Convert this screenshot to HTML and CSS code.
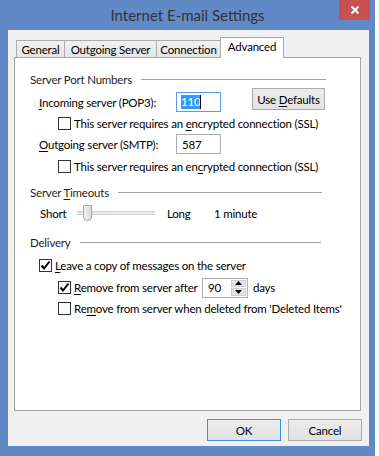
FILE: index.html
```html
<!doctype html>
<html>
  <head>
    <title>Internet E-mail Settings</title>
    <link rel="stylesheet" href="styles.css">
  </head>
  <body>

    <div class="window">

      <!--Title bar-->
      <div class="titlebar">
        <span class="title">Internet E-mail Settings</span>
        <span class="close">
          <svg width="10" height="10" viewBox="0 0 10 10"><path d="M1.5 1.5 L8.5 8.5 M8.5 1.5 L1.5 8.5" stroke="#fff" stroke-width="2"/></svg>
        </span>
      </div>

      <div class="client">

        <!--Tabs-->
        <div class="tabs">
          <div class="tab tab-general">General</div>
          <div class="tab tab-outgoing">Outgoing Server</div>
          <div class="tab tab-connection">Connection</div>
          <div class="tab tab-advanced active">Advanced</div>
        </div>

        <!--Advanced page-->
        <div class="panel">

          <div class="row group">
            <span>Server Port Numbers</span>
            <span class="rule"></span>
          </div>

          <div class="row lvl1 port-in">
            <span class="port-label"><u>I</u>ncoming server (POP3):</span>
            <span class="field focused"><span class="sel">110</span><span class="caret"></span></span>
            <span class="btn small"><span>Use <u>D</u>efaults</span></span>
          </div>
          <div class="row lvl2 ssl-in">
            <span class="cb"></span>
            <span>This server requires an <u>e</u>ncrypted connection (SSL)</span>
          </div>

          <div class="row lvl1">
            <span class="port-label"><u>O</u>utgoing server (SMTP):</span>
            <span class="field">587</span>
          </div>
          <div class="row lvl2">
            <span class="cb"></span>
            <span>This server requires an en<u>c</u>rypted connection (SSL)</span>
          </div>

          <div class="row group group-timeouts">
            <span>Server <u>T</u>imeouts</span>
            <span class="rule"></span>
          </div>
          <div class="row slider-row">
            <span class="short">Short</span>
            <span class="slider"><span class="thumb"></span></span>
            <span class="long">Long</span>
            <span>1 minute</span>
          </div>

          <div class="row group group-delivery">
            <span>Delivery</span>
            <span class="rule"></span>
          </div>
          <div class="row lvl1 leave">
            <span class="cb checked">
              <svg width="11" height="11" viewBox="0 0 11 11"><path d="M1.5 5.5 L4 8.5 L9.5 1.5" fill="none" stroke="#000" stroke-width="2"/></svg>
            </span>
            <span><u>L</u>eave a copy of messages on the server</span>
          </div>
          <div class="row lvl2 remove-after">
            <span class="cb checked">
              <svg width="11" height="11" viewBox="0 0 11 11"><path d="M1.5 5.5 L4 8.5 L9.5 1.5" fill="none" stroke="#000" stroke-width="2"/></svg>
            </span>
            <span class="after-label"><u>R</u>emove from server after</span>
            <span class="spin">
              <span class="spin-value">90</span>
              <span class="spin-btns">
                <span class="spin-btn">
                  <svg width="7" height="4" viewBox="0 0 7 4"><path d="M0 4 L3.5 0 L7 4 Z" fill="#000"/></svg>
                </span>
                <span class="spin-btn">
                  <svg width="7" height="4" viewBox="0 0 7 4"><path d="M0 0 L3.5 4 L7 0 Z" fill="#000"/></svg>
                </span>
              </span>
            </span>
            <span class="days">days</span>
          </div>
          <div class="row lvl2 remove-deleted">
            <span class="cb"></span>
            <span>Re<u>m</u>ove from server when deleted from 'Deleted Items'</span>
          </div>

        </div>

        <!--Dialog buttons-->
        <div class="actions">
          <span class="btn default">OK</span>
          <span class="btn">Cancel</span>
        </div>

      </div>
    </div>

  </body>
</html>
```

FILE: styles.css
```css
body {
  margin:0;
  background:#fff;
  font-family: Lato, "Segoe UI", sans-serif;
  font-size:11.5px;
  letter-spacing:-0.2px;
  color:#000;
}

u {
  text-decoration:underline;
  text-underline-offset:2px;
}

.window {
  position:relative;
  width:375px;
  height:456px;
  background:#6189c6;
  display:flex;
  flex-direction:column;
}

.titlebar {
  height:30px;
  display:flex;
  align-items:center;
  justify-content:center;
}
.title {
  font-size:15px;
  letter-spacing:0;
  color:#333;
}
.close {
  position:absolute;
  top:0;
  right:5px;
  width:31px;
  height:20px;
  background:#c75050;
  display:flex;
  align-items:center;
  justify-content:center;
}

.client {
  margin:0 6px 0 8px;
  height:416px;
  box-sizing:border-box;
  padding:7px 8px 0 6px;
  background:#f1f0f1;
}

/* Tabs */

.tabs {
  display:flex;
  align-items:flex-end;
  height:20px;
  padding-left:2px;
  position:relative;
  z-index:1;
}
.tab {
  box-sizing:border-box;
  height:17px;
  margin-right:-1px;
  border:1px solid #acacac;
  border-bottom:none;
  background:linear-gradient(#f0f0f0, #e5e5e5);
  display:flex;
  align-items:center;
  justify-content:center;
}
.tab-general { width:49px; }
.tab-outgoing { width:93px; }
.tab-connection { width:65px; }
.tab-advanced { width:64px; }
.tab.active {
  height:21px;
  margin-bottom:-1px;
  background:#fff;
  padding-bottom:3px;
}

.panel {
  height:354px;
  box-sizing:border-box;
  border:1px solid #a3a8a3;
  background:#fff;
  padding:10px 0 0 15px;
}

/* Rows */

.row {
  display:flex;
  align-items:center;
  height:22px;
  white-space:nowrap;
}
.lvl1 { margin-left:9px; }
.lvl2 { margin-left:28px; }

.group span:first-child { color:#1e1e1e; }
.rule {
  flex:1;
  height:1px;
  background:#a0a0a0;
  margin:0 34px 0 9px;
}
.group-timeouts { margin-top:4px; }
.group-timeouts .rule { margin-right:38px; }
.group-delivery { margin-top:8px; }
.group-delivery .rule { margin-right:39px; }

.port-in { margin-top:1px; }
.ssl-in { height:20px; }
.port-label { width:137px; }

.field {
  box-sizing:border-box;
  width:45px;
  height:20px;
  padding-left:5px;
  border:1px solid #abadb3;
  background:#fff;
  display:flex;
  align-items:center;
}
.field.focused {
  border-color:#5a9be6;
  padding-left:4px;
}
.sel {
  background:#3399ff;
  color:#fff;
  line-height:14px;
}
.caret {
  width:1px;
  height:14px;
  background:#000;
}

.btn {
  box-sizing:border-box;
  width:74px;
  height:22px;
  border:1px solid #acacac;
  background:linear-gradient(#ececec, #e2e2e2);
  display:flex;
  align-items:center;
  justify-content:center;
}
.btn.small {
  width:73px;
  margin-left:31px;
  align-self:flex-start;
  margin-top:-3px;
}
.btn.default { border-color:#3c8ef0; }

/* Checkboxes */

.cb {
  box-sizing:border-box;
  width:13px;
  height:13px;
  margin-right:3px;
  border:1px solid #333;
  background:#fff;
  display:flex;
  align-items:center;
  justify-content:center;
  flex-shrink:0;
}

/* Slider */

.slider-row { height:20px; }
.short {
  width:37px;
  margin-left:10px;
}
.slider {
  width:78px;
  height:17px;
  display:flex;
  align-items:center;
  background:linear-gradient(to bottom, transparent 6px, #d4d4d4 6px, #d4d4d4 7px, #e8eaea 7px, #e8eaea 9px, #d4d4d4 9px, #d4d4d4 10px, transparent 10px);
}
.thumb {
  box-sizing:border-box;
  width:9px;
  height:16px;
  margin-left:6px;
  border:1px solid #a8a8a8;
  border-radius:1px 1px 4px 4px;
  background:linear-gradient(to right, #f2f2f2, #dcdcdc);
}
.long {
  width:47px;
  margin-left:12px;
}

/* Delivery */

.leave { margin-top:1px; }
.remove-after { height:23px; }
.remove-deleted { height:19px; }
.after-label { width:128px; }

.spin {
  box-sizing:border-box;
  width:46px;
  height:20px;
  border:1px solid #abadb3;
  background:#fff;
  display:flex;
}
.spin-value {
  flex:1;
  padding-left:5px;
  display:flex;
  align-items:center;
}
.spin-btns {
  width:15px;
  display:flex;
  flex-direction:column;
  padding:1px 1px 1px 0;
  gap:1px;
}
.spin-btn {
  flex:1;
  background:#e6e6e6;
  border:1px solid #cfcfcf;
  display:flex;
  align-items:center;
  justify-content:center;
}
.days { margin-left:5px; }

/* Dialog buttons */

.actions {
  display:flex;
  justify-content:flex-end;
  gap:7px;
  margin-top:8px;
  margin-right:-1px;
}
```
